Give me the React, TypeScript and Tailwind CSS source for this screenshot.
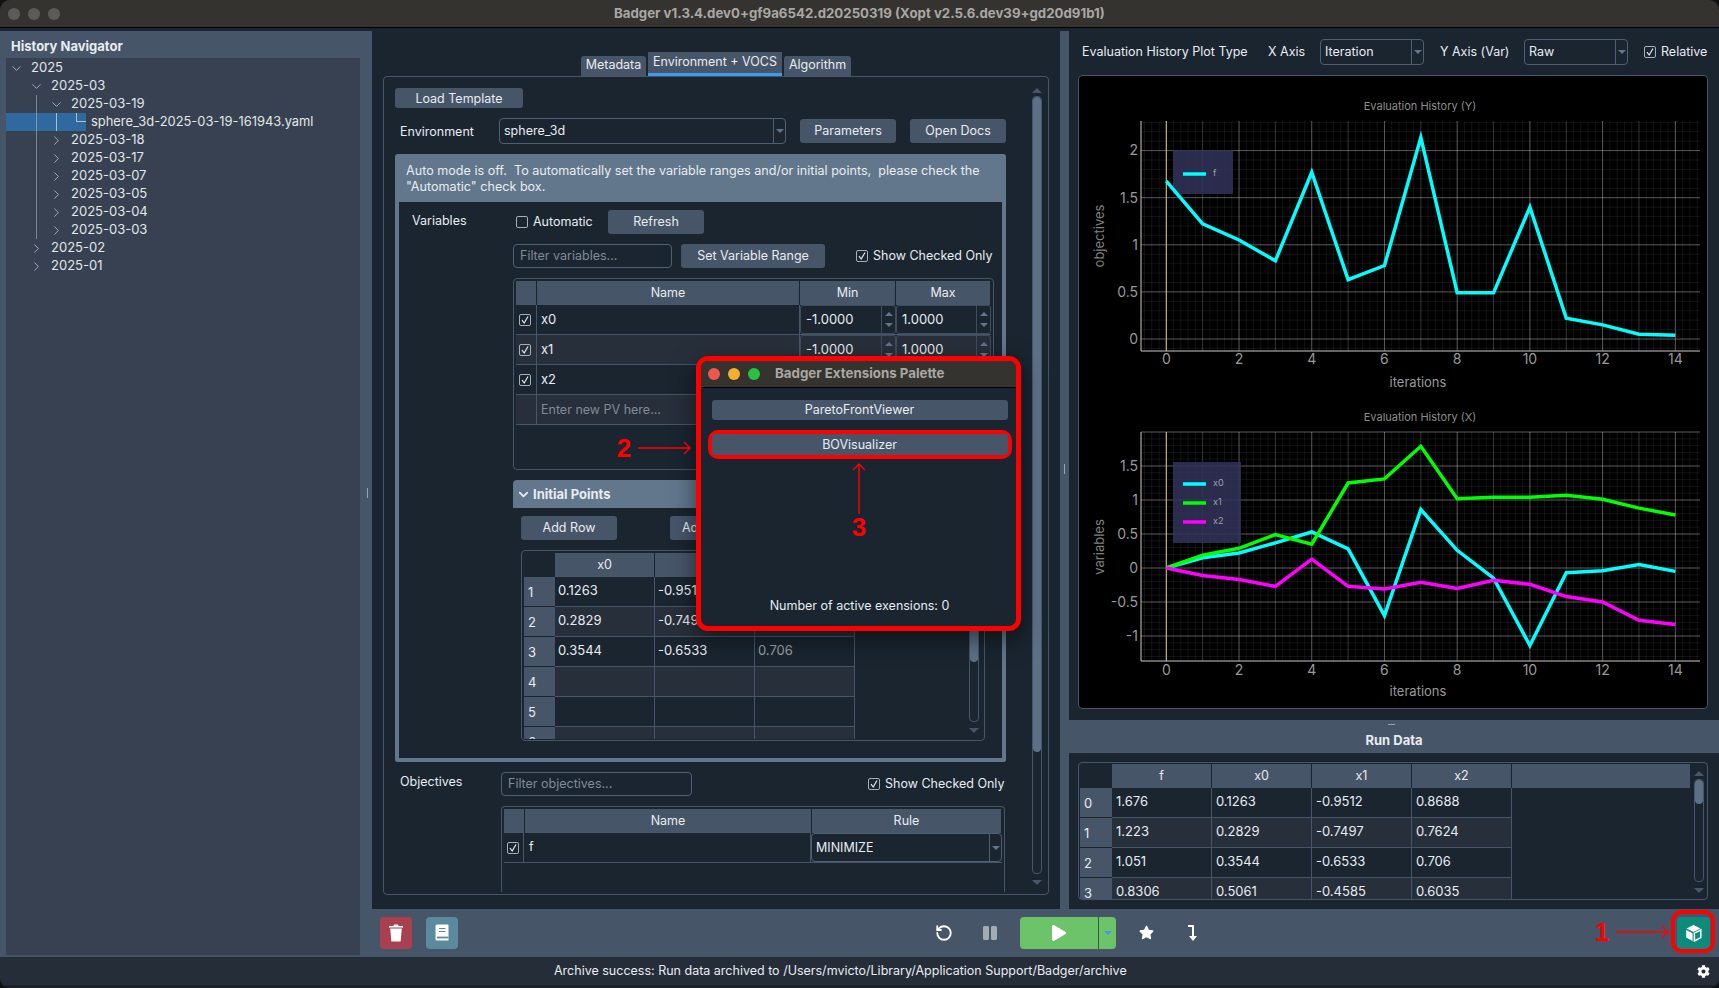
import React from "react";
import { ChevronDown, ChevronRight, RotateCcw } from "lucide-react";
import { FaPlay, FaPause, FaStar, FaCog } from "react-icons/fa";

const DARK = "bg-[#1a2530]";

function Btn({ children, className = "" }: { children: React.ReactNode; className?: string }) {
  return (
    <div className={"flex shrink-0 items-center justify-center rounded-[3px] bg-[#475569] pt-[1px] text-[12.5px] text-[#e8ecf0] " + className}>
      {children}
    </div>
  );
}

function Check({ on = true }: { on?: boolean }) {
  return (
    <span className="flex h-[12px] w-[12px] shrink-0 items-center justify-center rounded-[2px] border border-[#a4afbc]">
      {on && (
        <svg width="10" height="10" viewBox="0 0 10 10">
          <path d="M2 5.2 L4.2 8 L8 1.5" fill="none" stroke="#e5e9ee" strokeWidth="1.2" />
        </svg>
      )}
    </span>
  );
}

function Tri({ up = false, cls = "border-t-[#64748b]" }: { up?: boolean; cls?: string }) {
  return up ? (
    <span className="h-0 w-0 border-x-[4px] border-b-[4px] border-x-transparent border-b-[#64748b]" />
  ) : (
    <span className={"h-0 w-0 border-x-[4px] border-t-[4px] border-x-transparent " + cls} />
  );
}

function Combo({ value, className = "" }: { value: string; className?: string }) {
  return (
    <div className={"flex shrink-0 items-stretch rounded-[4px] border border-[#4f5f72] text-[12.5px] text-[#e8ecf0] " + className}>
      <span className="flex flex-1 items-center pl-[4px] pt-[1px]">{value}</span>
      <span className="flex w-[12px] items-center justify-center border-l border-[#4f5f72]">
        <Tri />
      </span>
    </div>
  );
}

function Input({ ph, className = "" }: { ph: string; className?: string }) {
  return (
    <div className={"flex h-[24px] shrink-0 items-center rounded-[4px] border border-[#4f5f72] pl-[6px] pt-[1px] text-[12.5px] text-[#808b97] " + className}>
      {ph}
    </div>
  );
}

function VScroll({ className = "", thumb }: { className?: string; thumb: string }) {
  return (
    <div className={"flex w-[10px] shrink-0 flex-col items-center " + className}>
      <div className="flex h-[8px] items-start justify-center">
        <span className="h-0 w-0 border-x-[5px] border-b-[5px] border-x-transparent border-b-[#475569]" />
      </div>
      <div className="w-full flex-1 rounded-[4px] border border-[#475569]">
        <div className={"rounded-[4px] bg-[#5d7186] " + thumb} />
      </div>
      <div className="flex h-[11px] items-end justify-center">
        <span className="h-0 w-0 border-x-[5px] border-t-[5px] border-x-transparent border-t-[#475569]" />
      </div>
    </div>
  );
}

function Spin({ v }: { v: string }) {
  return (
    <div className="flex h-full flex-1 items-center rounded-[3px] border border-[#3f4c5c] pl-[5px] text-[13px] text-[#e8ecf0]">
      <span className="flex-1">{v}</span>
      <span className="flex h-full w-[14px] flex-col items-center justify-around border-l border-[#3f4c5c] py-[3px]">
        <Tri up />
        <Tri />
      </span>
    </div>
  );
}

function HeadCell({ children, w }: { children?: React.ReactNode; w: string }) {
  return (
    <div className={"flex h-[24px] shrink-0 items-center justify-center border-r border-[#1a2530] bg-[#475569] text-[12.5px] text-[#e8ecf0] " + w}>
      {children}
    </div>
  );
}

function VarRow({ name, alt, min, max }: { name: string; alt?: boolean; min: string; max: string }) {
  return (
    <div className={"flex h-[30px] border-b border-[#475569] text-[13px] text-[#e8ecf0] " + (alt ? "bg-[#272f3a]" : "")}>
      <div className="flex w-[21px] shrink-0 items-center justify-center border-r border-[#475569] pr-[2px]">
        <Check />
      </div>
      <div className="flex w-[263px] shrink-0 items-center border-r border-[#475569] pl-[4px]">{name}</div>
      <div className="flex w-[96px] shrink-0"><Spin v={min} /></div>
      <div className="flex w-[95px] shrink-0"><Spin v={max} /></div>
    </div>
  );
}

function DataRow({ i, cells, alt, idxW = "w-[32px]", pad = "pl-[4px]", greyLast }: { i: number; cells: string[]; alt?: boolean; idxW?: string; pad?: string; greyLast?: boolean }) {
  return (
    <div className="flex h-[30px] text-[13px] text-[#e8ecf0]">
      <div className={"flex shrink-0 items-center border-b border-[#1a2530] bg-[#475569] pl-[4px] pt-[2px] " + idxW}>{i}</div>
      {cells.map((c, k) => (
        <div
          key={k}
          className={
            "flex w-[100px] shrink-0 items-center border-r border-b border-[#475569] pb-[2px] " + pad + " " +
            (alt ? "bg-[#272f3a] " : "bg-[#1a2530] ") +
            (greyLast && k === 2 ? "text-[#9aa3ad]" : "")
          }
        >
          {c}
        </div>
      ))}
    </div>
  );
}

function Tree() {
  const Row = ({ lvl, t, open }: { lvl: number; t: string; open?: boolean }) => (
    <div className="flex h-[18px] items-center text-[13px] text-[#e2e6ea]" style={{ paddingLeft: lvl * 20 }}>
      <span className="flex w-[20px] justify-center text-[#c6ccd4]">
        {open ? <ChevronDown size={15} strokeWidth={1.2} /> : <ChevronRight size={15} strokeWidth={1.2} />}
      </span>
      <span className="pl-[5px]">{t}</span>
    </div>
  );
  return (
    <div className="relative">
      <div className="absolute left-[30px] top-[36px] h-[144px] w-[1px] bg-[#7b8694]" />
      <Row lvl={0} t="2025" open />
      <Row lvl={1} t="2025-03" open />
      <Row lvl={2} t="2025-03-19" open />
      <div className="relative flex h-[18px] items-center text-[13px] text-[#e2e6ea]">
        <div className="absolute left-0 top-0 h-[18px] w-[80px] bg-[#2f6a9e]" />
        <div className="absolute left-[30px] top-0 h-[18px] w-[1px] bg-[#7f99b4]" />
        <div className="absolute left-[50px] top-0 h-[18px] w-[1px] bg-[#a9bfd4]" />
        <div className="absolute left-[70px] top-0 h-[9px] w-[10px] border-b border-l border-[#a9bfd4]" />
        <span className="relative pl-[85px] text-[12.9px]">sphere_3d-2025-03-19-161943.yaml</span>
      </div>
      {["2025-03-18", "2025-03-17", "2025-03-07", "2025-03-05", "2025-03-04", "2025-03-03"].map((d) => (
        <Row key={d} lvl={2} t={d} />
      ))}
      <Row lvl={1} t="2025-02" />
      <Row lvl={1} t="2025-01" />
    </div>
  );
}

const X0 = 1166.3;
const DX = 36.36;
const PL = 1141;
const PR = 1700;

function Plot({
  title, titleY, ylabel, ylabelY, top, axis, y0, dy, yTicks, series, legend, xTickY, xLabelY,
}: {
  title: string; titleY: number; ylabel: string; ylabelY: number; top: number; axis: number; y0: number; dy: number;
  yTicks: [number, string][]; series: { c: string; d: number[] }[];
  legend: { x: number; y: number; w: number; h: number; items: { c: string; t: string; y: number }[] };
  xTickY: number; xLabelY: number;
}) {
  const fine: string[] = [];
  for (let i = -3; i <= 75; i++) {
    const x = X0 + (i * DX) / 5;
    if (x > PL && x < PR) fine.push(`M${x} ${top}V${axis}`);
  }
  const vMin = (y0 - axis) / dy;
  const vMax = (y0 - top) / dy;
  for (let k = Math.ceil(vMin * 10); k <= Math.floor(vMax * 10); k++) {
    fine.push(`M${PL} ${y0 - (k / 10) * dy}H${PR}`);
  }
  const xs = Array.from({ length: 15 }, (_, i) => i);
  return (
    <g>
      <text x={1420} y={titleY} textAnchor="middle" dominantBaseline="middle" fontSize="11" fill="#8d8d8d">{title}</text>
      <path d={fine.join("")} stroke="#ffffff" strokeOpacity="0.07" strokeWidth="1" fill="none" />
      {xs.map((i) => (
        <line key={i} x1={X0 + i * DX} x2={X0 + i * DX} y1={top} y2={axis} stroke="#fff" strokeOpacity={i % 2 ? 0.15 : 0.3} />
      ))}
      {yTicks.map(([v]) => (
        <line key={v} x1={PL} x2={PR} y1={y0 - v * dy} y2={y0 - v * dy} stroke="#fff" strokeOpacity="0.3" />
      ))}
      <line x1={X0} x2={X0} y1={top} y2={axis} stroke="#c7c183" />
      <rect x={legend.x} y={legend.y} width={legend.w} height={legend.h} fill="#32325c" fillOpacity="0.85" />
      {series.map((s) => (
        <polyline
          key={s.c}
          points={s.d.map((v, i) => `${X0 + i * DX},${y0 - v * dy}`).join(" ")}
          fill="none"
          stroke={s.c}
          strokeWidth="3.5"
          strokeLinejoin="miter"
        />
      ))}
      {legend.items.map((it) => (
        <g key={it.t}>
          <line x1={1183} x2={1206} y1={it.y} y2={it.y} stroke={it.c} strokeWidth="3.5" />
          <text x={1213} y={it.y} dominantBaseline="middle" fontSize="9" fill="#a0a0a8">{it.t}</text>
        </g>
      ))}
      <path d={`M${PL} ${top}V${axis}H${PR}`} fill="none" stroke="#c9c9c9" />
      {yTicks.map(([v, l]) => (
        <text key={v} x={1138} y={y0 - v * dy + 1} textAnchor="end" dominantBaseline="middle" fontSize="14" fill="#999999">{l}</text>
      ))}
      {xs.filter((i) => i % 2 === 0).map((i) => (
        <text key={i} x={X0 + i * DX} y={xTickY} textAnchor="middle" dominantBaseline="middle" fontSize="14" fill="#999999">{i}</text>
      ))}
      <text x={1418} y={xLabelY} textAnchor="middle" dominantBaseline="middle" fontSize="13" fill="#999999">iterations</text>
      <text x={1100} y={ylabelY} textAnchor="middle" dominantBaseline="middle" fontSize="13" fill="#808080" transform={`rotate(-90 1100 ${ylabelY})`}>{ylabel}</text>
    </g>
  );
}

const F = [1.676, 1.223, 1.051, 0.8306, 1.77, 0.63, 0.78, 2.14, 0.49, 0.49, 1.4, 0.22, 0.15, 0.05, 0.04];
const XA = [0, 0.15, 0.22, 0.37, 0.53, 0.28, -0.7, 0.86, 0.26, -0.15, -1.14, -0.07, -0.04, 0.05, -0.05];
const XB = [0, 0.19, 0.29, 0.49, 0.35, 1.25, 1.31, 1.79, 1.02, 1.04, 1.04, 1.07, 1.01, 0.88, 0.78];
const XC = [0, -0.11, -0.17, -0.27, 0.13, -0.27, -0.31, -0.21, -0.3, -0.18, -0.24, -0.42, -0.5, -0.77, -0.83];

function Plots() {
  return (
    <svg width="628" height="632" viewBox="1079 76 628 632" className="block" fontFamily="Inter, sans-serif">
      <Plot
        title="Evaluation History (Y)" titleY={107} ylabel="objectives" ylabelY={236}
        top={121} axis={351} y0={339} dy={94.2}
        yTicks={[[0, "0"], [0.5, "0.5"], [1, "1"], [1.5, "1.5"], [2, "2"]]}
        series={[{ c: "#00ffff", d: F }]}
        legend={{ x: 1173, y: 150, w: 60, h: 44, items: [{ c: "#00ffff", t: "f", y: 174 }] }}
        xTickY={360} xLabelY={383}
      />
      <Plot
        title="Evaluation History (X)" titleY={418} ylabel="variables" ylabelY={547}
        top={432} axis={661} y0={568} dy={68}
        yTicks={[[-1, "-1"], [-0.5, "-0.5"], [0, "0"], [0.5, "0.5"], [1, "1"], [1.5, "1.5"]]}
        series={[{ c: "#00ffff", d: XA }, { c: "#00ff00", d: XB }, { c: "#ff00ff", d: XC }]}
        legend={{
          x: 1173, y: 462, w: 68, h: 81,
          items: [{ c: "#00ffff", t: "x0", y: 484 }, { c: "#00ff00", t: "x1", y: 503 }, { c: "#ff00ff", t: "x2", y: 522 }],
        }}
        xTickY={671} xLabelY={692}
      />
      <line x1={PL} x2={PR} y1={432} y2={432} stroke="#fff" strokeOpacity="0.3" />
    </svg>
  );
}

function MainPane() {
  const t2 = { idxW: "w-[31px]", pad: "pl-[3px]" };
  return (
    <div className={"flex w-[688px] shrink-0 flex-col pl-[11px] pt-[24px] " + DARK}>
      <div className="flex h-[24px] w-[666px] items-end justify-center gap-[2px] text-[12.5px] text-[#e8ecf0]">
        <div className="flex h-[20px] w-[65px] items-center justify-center rounded-t-[3px] bg-[#475569] pb-[1px]">Metadata</div>
        <div className="flex h-[24px] w-[134px] items-center justify-center border-b-[3px] border-[#3d9be9] bg-[#475569] pb-[1px]">Environment + VOCS</div>
        <div className="flex h-[20px] w-[67px] items-center justify-center rounded-t-[3px] bg-[#475569] pb-[1px]">Algorithm</div>
      </div>
      <div className="flex h-[819px] w-[666px] overflow-hidden rounded-[4px] border border-[#475569] pl-[11px] pt-[11px]">
        <div className="flex w-[611px] shrink-0 flex-col text-[12.5px] text-[#e8ecf0]">
          <Btn className="h-[20px] w-[128px]"><span className="translate-y-[1px]">Load Template</span></Btn>
          <div className="mt-[10px] flex h-[26px] items-center">
            <span className="w-[104px] shrink-0 pl-[5px] pt-[2px]">Environment</span>
            <Combo value="sphere_3d" className="h-[26px] w-[287px]" />
            <Btn className="ml-[14px] h-[24px] w-[96px]">Parameters</Btn>
            <Btn className="ml-[14px] h-[24px] w-[96px]">Open Docs</Btn>
          </div>
          <div className="mt-[10px] h-[608px] w-[611px]">
            <div className="h-[48px] whitespace-nowrap rounded-t-[3px] bg-[#62778c] px-[11px] pt-[9px] text-[12.6px] leading-[16px]">
              Auto mode is off.&nbsp; To automatically set the variable ranges and/or initial points,&nbsp; please check the
              <br />
              "Automatic" check box.
            </div>
            <div className="flex h-[560px] rounded-b-[3px] border-x-[4px] border-b-[4px] border-[#62778c] pt-[8px]">
              <div className="w-[114px] shrink-0 pl-[13px] pt-[2px]">Variables</div>
              <div className="flex w-[481px] shrink-0 flex-col">
                <div className="flex h-[24px] items-center pl-[3px]">
                  <Check on={false} />
                  <span className="ml-[5px] w-[75px] pt-[1px]">Automatic</span>
                  <Btn className="h-[24px] w-[96px]">Refresh</Btn>
                </div>
                <div className="mt-[10px] flex h-[24px] items-center">
                  <Input ph="Filter variables..." className="w-[159px]" />
                  <Btn className="ml-[9px] h-[24px] w-[144px]">Set Variable Range</Btn>
                  <span className="ml-[31px]"><Check /></span>
                  <span className="ml-[5px] whitespace-nowrap pt-[1px]">Show Checked Only</span>
                </div>
                <div className="mt-[10px] h-[192px] rounded-[4px] border border-[#475569] p-[2px]">
                  <div className="flex">
                    <HeadCell w="w-[21px]" />
                    <HeadCell w="w-[263px]">Name</HeadCell>
                    <HeadCell w="w-[96px]">Min</HeadCell>
                    <HeadCell w="w-[95px]">Max</HeadCell>
                  </div>
                  <VarRow name="x0" min="-1.0000" max="1.0000" />
                  <VarRow name="x1" alt min="-1.0000" max="1.0000" />
                  <VarRow name="x2" min="-1.0000" max="1.0000" />
                  <div className="flex h-[30px] items-center border-b border-[#475569] bg-[#272f3a] text-[#808b97]">
                    <div className="h-full w-[21px] border-r border-[#475569]" />
                    <span className="pl-[4px] pt-[1px]">Enter new PV here...</span>
                  </div>
                </div>
                <div className="mt-[10px] flex h-[28px] items-center rounded-t-[4px] bg-[#62778c] pl-[3px] pt-[1px] text-[13px] font-bold">
                  <ChevronDown size={15} strokeWidth={3} />
                  <span className="ml-[2px]">Initial Points</span>
                </div>
                <div className="ml-[8px] mt-[8px] flex">
                  <Btn className="h-[24px] w-[96px]">Add Row</Btn>
                  <Btn className="ml-[53px] h-[24px] w-[96px]">Add Current</Btn>
                </div>
                <div className="ml-[8px] mt-[10px] flex h-[191px] w-[464px] overflow-hidden rounded-[4px] border border-[#475569] p-[2px]">
                  <div className="h-[186px] w-[331px] shrink-0 overflow-hidden">
                    <div className="flex">
                      <div className="h-[24px] w-[31px] shrink-0" />
                      <HeadCell w="w-[100px]">x0</HeadCell>
                      <HeadCell w="w-[100px]">x1</HeadCell>
                      <HeadCell w="w-[100px]">x2</HeadCell>
                    </div>
                    <DataRow {...t2} greyLast i={1} cells={["0.1263", "-0.9512", "0.8688"]} />
                    <DataRow {...t2} greyLast i={2} alt cells={["0.2829", "-0.7497", "0.7624"]} />
                    <DataRow {...t2} greyLast i={3} cells={["0.3544", "-0.6533", "0.706"]} />
                    <DataRow {...t2} i={4} alt cells={["", "", ""]} />
                    <DataRow {...t2} i={5} cells={["", "", ""]} />
                    <DataRow {...t2} i={6} alt cells={["", "", ""]} />
                  </div>
                  <VScroll className="ml-[114px] h-[180px]" thumb="h-[100px]" />
                </div>
              </div>
            </div>
          </div>
          <div className="mt-[10px] flex h-[24px] items-center">
            <span className="w-[106px] shrink-0 pb-[4px] pl-[5px]">Objectives</span>
            <Input ph="Filter objectives..." className="w-[191px]" />
            <span className="ml-[176px]"><Check /></span>
            <span className="ml-[5px] whitespace-nowrap pt-[1px]">Show Checked Only</span>
          </div>
          <div className="ml-[106px] mt-[10px] h-[86px] w-[504px] rounded-t-[4px] border-x border-t border-[#475569] px-[2px] pt-[2px]">
            <div className="flex">
              <HeadCell w="w-[21px]" />
              <HeadCell w="w-[287px]">Name</HeadCell>
              <HeadCell w="w-[190px]">Rule</HeadCell>
            </div>
            <div className="flex h-[30px] border-b border-[#475569]">
              <div className="flex w-[20px] shrink-0 items-center justify-center border-r border-[#475569] pr-[2px]">
                <Check />
              </div>
              <div className="flex w-[287px] shrink-0 items-center border-r border-[#475569] pl-[5px]">f</div>
              <Combo value="MINIMIZE" className="w-[191px]" />
            </div>
          </div>
        </div>
        <VScroll className="ml-[26px] h-[797px]" thumb="h-[655px]" />
      </div>
    </div>
  );
}

function RightPane() {
  return (
    <div className="flex w-[650px] shrink-0 flex-col">
      <div className={"flex h-[47px] items-center pl-[13px] pt-[1px] text-[12.5px] text-[#e8ecf0] " + DARK}>
        <span className="w-[186px] shrink-0 pt-[1px]">Evaluation History Plot Type</span>
        <span className="w-[52px] shrink-0 pt-[1px]">X Axis</span>
        <Combo value="Iteration" className="h-[26px] w-[104px]" />
        <span className="ml-[16px] w-[84px] shrink-0 pt-[1px]">Y Axis (Var)</span>
        <Combo value="Raw" className="h-[26px] w-[104px]" />
        <span className="ml-[16px]"><Check /></span>
        <span className="ml-[5px] pt-[1px]">Relative</span>
      </div>
      <div className={"h-[645px] pl-[9px] " + DARK}>
        <div className="h-[634px] w-[630px] overflow-hidden rounded-[4px] border border-[#475569] bg-black">
          <Plots />
        </div>
      </div>
      <div className="relative flex h-[33px] items-center justify-center pt-[9px] text-[13px] font-bold text-[#e8ecf0]">
        <div className="absolute left-[319px] top-[4px] h-[1px] w-[7px] bg-[#94a3b8]" />
        Run Data
      </div>
      <div className={"h-[156px] pl-[9px] pt-[9px] " + DARK}>
        <div className="flex h-[138px] w-[630px] overflow-hidden rounded-[4px] border border-[#475569] p-[1px] pb-0">
          <div className="h-[135px] w-[611px] shrink-0 overflow-hidden">
            <div className="flex">
              <div className="h-[24px] w-[32px] shrink-0" />
              <HeadCell w="w-[100px]">f</HeadCell>
              <HeadCell w="w-[100px]">x0</HeadCell>
              <HeadCell w="w-[100px]">x1</HeadCell>
              <HeadCell w="w-[100px]">x2</HeadCell>
              <div className="h-[24px] w-[178px] bg-[#475569]" />
            </div>
            <DataRow i={0} cells={["1.676", "0.1263", "-0.9512", "0.8688"]} />
            <DataRow i={1} alt cells={["1.223", "0.2829", "-0.7497", "0.7624"]} />
            <DataRow i={2} cells={["1.051", "0.3544", "-0.6533", "0.706"]} />
            <DataRow i={3} alt cells={["0.8306", "0.5061", "-0.4585", "0.6035"]} />
          </div>
          <VScroll className="ml-[3px] mt-[7px] h-[122px]" thumb="h-[24px]" />
        </div>
      </div>
    </div>
  );
}

function BottomBar() {
  return (
    <div className="flex h-[48px] items-center pb-[1px] pl-[8px] text-white">
      <div className="flex h-[32px] w-[32px] items-center justify-center rounded-[4px] bg-[#a8404f]">
        <svg width="14" height="18" viewBox="0 0 14 18" fill="#fff">
          <path d="M5 0.5h4l.6 1.5H14v1.6H0V2h4.4z" />
          <path d="M1.2 4.6h11.6L11.6 17.5H2.4z" />
        </svg>
      </div>
      <div className="ml-[14px] flex h-[32px] w-[32px] items-center justify-center rounded-[4px] bg-[#5b8a9e]">
        <svg width="14" height="17" viewBox="0 0 14 17">
          <path d="M2 0.5H12.5a1 1 0 0 1 1 1V16.5H2a1.5 1.5 0 0 1-1.5-1.5V2A1.5 1.5 0 0 1 2 .5z" fill="#fff" />
          <path d="M4 4.5H10.5M4 7.5H10.5" stroke="#5b8a9e" strokeWidth="1.1" />
          <path d="M2 12.6H13.5V14.4H2z" fill="#5b8a9e" />
        </svg>
      </div>
      <span className="ml-[476px] flex w-[20px] justify-center"><RotateCcw size={18} strokeWidth={2.4} /></span>
      <span className="ml-[26px] flex w-[20px] justify-center text-[#a3abb5]"><FaPause size={16} /></span>
      <div className="ml-[20px] flex h-[32px] w-[96px] rounded-[4px] bg-[#6cc36a]">
        <span className="flex w-[79px] items-center justify-center border-r border-[#2e5f3e]"><FaPlay size={16} /></span>
        <span className="flex flex-1 items-center justify-center">
          <span className="h-0 w-0 border-x-[4px] border-t-[4px] border-x-transparent border-t-[#3d9be9]" />
        </span>
      </div>
      <span className="ml-[20px] flex w-[20px] justify-center"><FaStar size={15} /></span>
      <span className="ml-[26px] flex w-[20px] justify-center">
        <svg width="14" height="18" viewBox="0 0 14 18" fill="#fff">
          <path d="M3 1h6v11h3l-4 5-4-5h3V3H3z" />
        </svg>
      </span>
      <div className="ml-auto mr-[9px] flex h-[32px] w-[33px] items-center justify-center rounded-[4px] bg-[#0e8a7d]">
        <svg width="17" height="18" viewBox="0 0 17 18">
          <path d="M8.5 1 15.5 4.6 8.5 8 1.5 4.6z" fill="#fff" />
          <path d="M1.2 6 7.6 9.2V17L1.2 13.6z" fill="#fff" />
          <path d="M15.8 6 9.4 9.2V17l6.4-3.4z" fill="none" stroke="#fff" strokeWidth="1.5" />
        </svg>
      </div>
    </div>
  );
}

function ExtensionsWindow() {
  return (
    <div className="absolute left-[696px] top-[356px] flex h-[275px] w-[325px] flex-col overflow-hidden rounded-[12px] border-[5px] border-[#ff0000] bg-[#1a2530] shadow-[0_8px_24px_rgba(0,0,0,0.5)]">
      <div className="flex h-[27px] shrink-0 items-center border-b border-black bg-[#353330] pl-[7px]">
        <span className="h-[12px] w-[12px] rounded-full bg-[#f0564d]" />
        <span className="ml-[8px] h-[12px] w-[12px] rounded-full bg-[#f5ae2e]" />
        <span className="ml-[8px] h-[12px] w-[12px] rounded-full bg-[#29c140]" />
        <span className="ml-[15px] text-[13.3px] font-bold text-[#a9a7a4]">Badger Extensions Palette</span>
      </div>
      <div className="flex flex-1 flex-col items-center pl-[2px] text-[12.5px] text-[#e8ecf0]">
        <Btn className="mt-[12px] h-[20px] w-[296px]">ParetoFrontViewer</Btn>
        <div className="mt-[10px] flex h-[29px] w-[304px] items-center justify-center rounded-[10px] border-[4px] border-[#ff0000]">
          <Btn className="h-[21px] w-[296px]">BOVisualizer</Btn>
        </div>
        <span className="mt-auto pb-[10px]">Number of active exensions: 0</span>
      </div>
    </div>
  );
}

function Annotations() {
  const num = "absolute -translate-x-1/2 -translate-y-1/2 text-[26px] font-bold leading-none text-[#ff0000] [font-family:'Liberation_Sans',sans-serif]";
  return (
    <>
      <span className={num + " left-[624px] top-[448px]"}>2</span>
      <svg className="absolute left-[638px] top-[440px]" width="54" height="16" viewBox="0 0 54 16">
        <path d="M0 8H52M46 2 52 8 46 14" fill="none" stroke="#ff0000" strokeWidth="1.4" />
      </svg>
      <svg className="absolute left-[851px] top-[462px]" width="16" height="52" viewBox="0 0 16 52">
        <path d="M8 52V2M2 8 8 2 14 8" fill="none" stroke="#ff0000" strokeWidth="1.4" />
      </svg>
      <span className={num + " left-[859px] top-[527px]"}>3</span>
      <span className={num + " left-[1602px] top-[932px]"}>1</span>
      <svg className="absolute left-[1616px] top-[924px]" width="54" height="16" viewBox="0 0 54 16">
        <path d="M0 8H52M46 2 52 8 46 14" fill="none" stroke="#ff0000" strokeWidth="1.4" />
      </svg>
      <div className="absolute left-[1671px] top-[910px] h-[43px] w-[44px] rounded-[11px] border-[4px] border-[#ff0000]" />
    </>
  );
}

export default function App() {
  return (
    <div className="h-[988px] w-[1719px] overflow-hidden bg-[#111]">
      <div className="relative flex h-[988px] w-[1719px] flex-col overflow-hidden rounded-[10px] bg-[#1a2530] [font-family:Inter,sans-serif]">
        <div className="flex h-[28px] shrink-0 items-center border-b border-black bg-[#353330] pl-[8px]">
          <span className="h-[12px] w-[12px] rounded-full bg-[#5c5b58]" />
          <span className="ml-[8px] h-[12px] w-[12px] rounded-full bg-[#5c5b58]" />
          <span className="ml-[8px] h-[12px] w-[12px] rounded-full bg-[#5c5b58]" />
          <span className="ml-[554px] text-[13.25px] font-bold text-[#a9a7a4]">Badger v1.3.4.dev0+gf9a6542.d20250319 (Xopt v2.5.6.dev39+gd20d91b1)</span>
        </div>
        <div className="flex h-[929px] shrink-0">
          <div className="mt-[3px] flex w-[372px] shrink-0 bg-[#475569] pb-[2px] pl-[4px] pr-[12px]">
            <div className="ml-[2px] mt-[2px] flex w-[354px] flex-col bg-[#374151]">
              <div className="flex h-[25px] shrink-0 items-center bg-[#475569] pl-[5px] pt-[2px] text-[13px] font-bold text-[#e8ecf0]">History Navigator</div>
              <div className="pt-[1px]"><Tree /></div>
            </div>
          </div>
          <div className="flex w-[1347px] shrink-0 flex-col bg-[#475569]">
            <div className="flex h-[881px] shrink-0">
              <MainPane />
              <div className={"w-[9px] shrink-0 " + DARK}>
                <div className="mt-[3px] h-[878px] bg-[#475569]" />
              </div>
              <RightPane />
            </div>
            <BottomBar />
          </div>
        </div>
        <div className="relative flex h-[28px] shrink-0 items-center bg-[#252d38] pl-[554px] text-[12.5px] text-[#e8ecf0]">
          Archive success: Run data archived to /Users/mvicto/Library/Application Support/Badger/archive
          <FaCog size={13} className="absolute left-[1697px] top-[8px] text-white" />
        </div>
        <div className="h-[3px] shrink-0 bg-[#1c222a]" />
        <div className="absolute left-[367px] top-[488px] h-[10px] w-[1px] bg-[#94a3b8]" />
        <div className="absolute left-[1064px] top-[464px] h-[10px] w-[1px] bg-[#94a3b8]" />
        <ExtensionsWindow />
        <Annotations />
      </div>
    </div>
  );
}
